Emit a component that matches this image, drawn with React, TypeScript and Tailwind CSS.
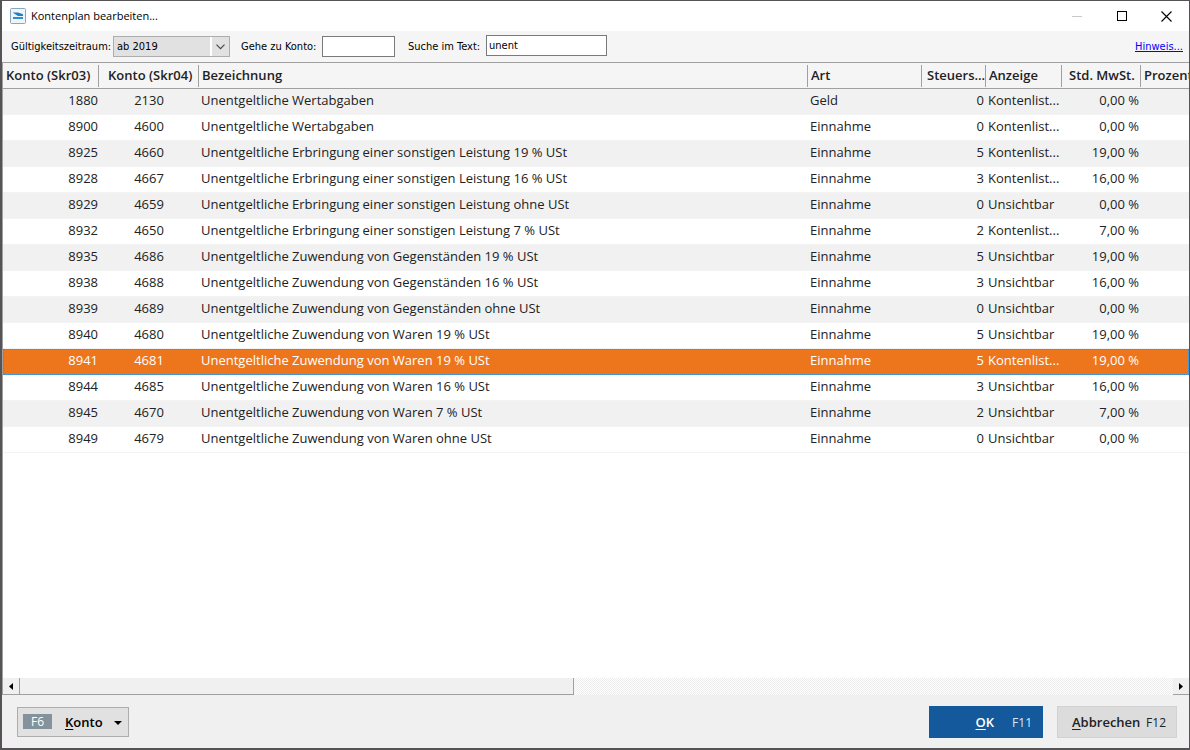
import { useState } from "react";

type Account = {
  skr03: string;
  skr04: string;
  name: string;
  kind: string;
  taxKey: number;
  display: string;
  vat: string;
};

const LIST = "Kontenlist...";
const HIDDEN = "Unsichtbar";

const accounts: Account[] = [
  { skr03: "1880", skr04: "2130", name: "Unentgeltliche Wertabgaben", kind: "Geld", taxKey: 0, display: LIST, vat: "0,00 %" },
  { skr03: "8900", skr04: "4600", name: "Unentgeltliche Wertabgaben", kind: "Einnahme", taxKey: 0, display: LIST, vat: "0,00 %" },
  { skr03: "8925", skr04: "4660", name: "Unentgeltliche Erbringung einer sonstigen Leistung 19 % USt", kind: "Einnahme", taxKey: 5, display: LIST, vat: "19,00 %" },
  { skr03: "8928", skr04: "4667", name: "Unentgeltliche Erbringung einer sonstigen Leistung 16 % USt", kind: "Einnahme", taxKey: 3, display: LIST, vat: "16,00 %" },
  { skr03: "8929", skr04: "4659", name: "Unentgeltliche Erbringung einer sonstigen Leistung ohne USt", kind: "Einnahme", taxKey: 0, display: HIDDEN, vat: "0,00 %" },
  { skr03: "8932", skr04: "4650", name: "Unentgeltliche Erbringung einer sonstigen Leistung 7 % USt", kind: "Einnahme", taxKey: 2, display: LIST, vat: "7,00 %" },
  { skr03: "8935", skr04: "4686", name: "Unentgeltliche Zuwendung von Gegenständen 19 % USt", kind: "Einnahme", taxKey: 5, display: HIDDEN, vat: "19,00 %" },
  { skr03: "8938", skr04: "4688", name: "Unentgeltliche Zuwendung von Gegenständen 16 % USt", kind: "Einnahme", taxKey: 3, display: HIDDEN, vat: "16,00 %" },
  { skr03: "8939", skr04: "4689", name: "Unentgeltliche Zuwendung von Gegenständen ohne USt", kind: "Einnahme", taxKey: 0, display: HIDDEN, vat: "0,00 %" },
  { skr03: "8940", skr04: "4680", name: "Unentgeltliche Zuwendung von Waren 19 % USt", kind: "Einnahme", taxKey: 5, display: HIDDEN, vat: "19,00 %" },
  { skr03: "8941", skr04: "4681", name: "Unentgeltliche Zuwendung von Waren 19 % USt", kind: "Einnahme", taxKey: 5, display: LIST, vat: "19,00 %" },
  { skr03: "8944", skr04: "4685", name: "Unentgeltliche Zuwendung von Waren 16 % USt", kind: "Einnahme", taxKey: 3, display: HIDDEN, vat: "16,00 %" },
  { skr03: "8945", skr04: "4670", name: "Unentgeltliche Zuwendung von Waren 7 % USt", kind: "Einnahme", taxKey: 2, display: HIDDEN, vat: "7,00 %" },
  { skr03: "8949", skr04: "4679", name: "Unentgeltliche Zuwendung von Waren ohne USt", kind: "Einnahme", taxKey: 0, display: HIDDEN, vat: "0,00 %" },
];

const columns = [
  { label: "Konto (Skr03)", width: "w-[96px]" },
  { label: "Konto (Skr04)", width: "w-[100px]", pad: "pl-[9px]" },
  { label: "Bezeichnung", width: "" },
  { label: "Art", width: "w-[114px]" },
  { label: "Steuers...", width: "w-[64px]", pad: "pl-[5px]" },
  { label: "Anzeige", width: "w-[76px]" },
  { label: "Std. MwSt.", width: "w-[79px]", pad: "pl-[7px]" },
  { label: "Prozent", width: "w-[48px]" },
];

function AppIcon() {
  return (
    <svg width="16" height="16" viewBox="0 0 16 16" aria-hidden>
      <rect x="0.5" y="0.5" width="15" height="15" rx="1" fill="#f1f4f6" stroke="#86a9bd" />
      <path d="M2.5 4.6 H8 L13 6.2 V8 H8 Z" fill="#1f7fc4" />
      <path d="M3 9 H13 V11 H3 Z" fill="#2b8fd3" />
    </svg>
  );
}

function TitleBar() {
  return (
    <header className="flex h-[30px] shrink-0 items-center bg-white pl-2">
      <AppIcon />
      <h1 className="ml-[5px] flex-1 text-[11px] text-black">Kontenplan bearbeiten...</h1>
      <button type="button" aria-label="Minimieren" disabled className="grid h-full w-[45px] place-items-center">
        <svg width="10" height="10" viewBox="0 0 10 10" shapeRendering="crispEdges">
          <path d="M0 5.5h10" stroke="#c8c8c8" />
        </svg>
      </button>
      <button type="button" aria-label="Maximieren" className="grid h-full w-[45px] place-items-center">
        <svg width="10" height="10" viewBox="0 0 10 10" shapeRendering="crispEdges">
          <path d="M0.5 0.5h9v9h-9z" fill="none" stroke="#000" />
        </svg>
      </button>
      <button type="button" aria-label="Schließen" className="grid h-full w-[45px] place-items-center">
        <svg width="11" height="11" viewBox="0 0 11 11">
          <path d="M0.5 0.5l10 10M10.5 0.5l-10 10" stroke="#000" strokeWidth="1.1" />
        </svg>
      </button>
    </header>
  );
}

function Toolbar() {
  const [search, setSearch] = useState("unent");
  return (
    <div className="flex h-[31px] shrink-0 items-center bg-[#f5f5f5] pr-[6px] pl-[9px] font-['DejaVu_Sans_Condensed','DejaVu_Sans',sans-serif] text-[11px] text-black">
      <label htmlFor="period" className="w-[102px] pt-px whitespace-nowrap">
        Gültigkeitszeitraum:
      </label>
      <div className="relative">
        <select
          id="period"
          defaultValue="2019"
          className="h-[21px] w-[117px] appearance-none border border-[#adadad] bg-[#e1e1e1] pt-px pl-[3px]"
        >
          <option value="2019">ab 2019</option>
        </select>
        <span className="pointer-events-none absolute inset-y-px right-px grid w-[19px] place-items-center border-l-2 border-white">
          <svg width="9" height="6" viewBox="0 0 9 6" aria-hidden>
            <path d="M0.5 0.7l4 4 4-4" fill="none" stroke="#444" strokeWidth="1.1" />
          </svg>
        </span>
      </div>
      <label htmlFor="goto" className="ml-[11px] w-[81px] pt-px whitespace-nowrap">
        Gehe zu Konto:
      </label>
      <input id="goto" type="text" className="h-[21px] w-[73px] border border-[#7a7a7a] bg-white px-[2px]" />
      <label htmlFor="search" className="ml-[13px] w-[78px] pt-px whitespace-nowrap">
        Suche im Text:
      </label>
      <input
        id="search"
        type="text"
        value={search}
        onChange={(e) => setSearch(e.target.value)}
        className="mb-[2px] h-[21px] w-[121px] border border-[#7a7a7a] bg-white px-[2px]"
      />
      <a href="#hinweis" className="ml-auto pt-px text-[#0000ff] underline">
        Hinweis...
      </a>
    </div>
  );
}

function AccountTable() {
  const [selected, setSelected] = useState("8941");
  return (
    <div className="min-h-0 flex-1 overflow-hidden bg-white">
      <table className="w-full table-fixed border-separate border-spacing-0 text-[13px] text-[#222]">
        <thead>
          <tr className="bg-[#f5f5f5]">
            {columns.map((col) => (
              <th
                key={col.label}
                scope="col"
                className={`${col.width} h-[26px] border-b border-[#a0a0a0] p-0 text-left font-semibold`}
              >
                <div
                  className={`h-[22px] border-[#a0a0a0] leading-[20px] whitespace-nowrap ${col.pad ?? "pl-[3px]"} ${col.label === "Prozent" ? "" : "border-r"}`}
                >
                  {col.label}
                </div>
              </th>
            ))}
          </tr>
        </thead>
        <tbody>
          {accounts.map((a) => (
            <tr
              key={a.skr03}
              aria-selected={a.skr03 === selected}
              onClick={() => setSelected(a.skr03)}
              className={`whitespace-nowrap *:h-[26px] *:border-b *:border-[#f3f3f3] *:p-0 *:pb-[2px] ${
                a.skr03 === selected
                  ? "bg-[#ed751c] text-white outline-1 -outline-offset-1 outline-dotted outline-[#3a8dd0] *:border-transparent"
                  : "odd:bg-[#f1f1f1]"
              }`}
            >
              <td>
                <div className="pr-px text-right">{a.skr03}</div>
              </td>
              <td className="text-center">{a.skr04}</td>
              <td>
                <div className="overflow-hidden pl-[2px]">{a.name}</div>
              </td>
              <td>
                <div className="pl-[2px]">{a.kind}</div>
              </td>
              <td>
                <div className="pr-[2px] text-right">{a.taxKey}</div>
              </td>
              <td>
                <div className="pl-[2px]">{a.display}</div>
              </td>
              <td>
                <div className="pr-[2px] text-right">{a.vat}</div>
              </td>
              <td />
            </tr>
          ))}
        </tbody>
      </table>
    </div>
  );
}

function ScrollBar() {
  return (
    <div className="flex h-[17px] shrink-0 bg-[repeating-conic-gradient(#ececec_0_25%,#ffffff_0_50%)] bg-[size:2px_2px]">
      <button
        type="button"
        aria-label="Nach links"
        className="grid w-[17px] place-items-center border-r border-b border-[#a0a0a0] bg-[#f0f0f0]"
      >
        <svg width="4" height="7" viewBox="0 0 4 7" aria-hidden>
          <path d="M4 0v7L0 3.5z" fill="#000" />
        </svg>
      </button>
      <div className="w-[554px] border-r border-b border-[#a0a0a0] bg-[#f0f0f0]" />
      <button
        type="button"
        aria-label="Nach rechts"
        className="ml-auto grid w-[16px] place-items-center border-b border-[#a0a0a0] bg-[#f0f0f0]"
      >
        <svg width="4" height="7" viewBox="0 0 4 7" aria-hidden>
          <path d="M0 0v7L4 3.5z" fill="#000" />
        </svg>
      </button>
    </div>
  );
}

function Footer() {
  return (
    <footer className="flex h-[53px] shrink-0 items-center bg-[#f0f0f0] pr-3 pl-[15px] text-[13px]">
      <button
        type="button"
        className="flex h-[30px] w-[112px] items-center border border-[#adadad] bg-[#e1e1e1] pl-[5px] text-black"
      >
        <span className="grid h-[15px] w-[29px] place-items-center bg-[#84929b] text-[12px] leading-none text-white">
          F6
        </span>
        <span className="ml-[13px] pt-[2px] font-semibold">
          <u className="underline-offset-2">K</u>onto
        </span>
        <svg width="8" height="4" viewBox="0 0 8 4" className="mt-[2px] mr-[6px] ml-auto" aria-hidden>
          <path d="M0 0h8L4 4z" fill="#000" />
        </svg>
      </button>
      <button
        type="button"
        className="ml-auto flex h-8 w-[114px] items-center justify-end bg-[#14599b] pt-[2px] pr-[11px] text-white"
      >
        <span className="font-semibold">
          <u className="underline-offset-2">O</u>K
        </span>
        <span className="ml-[18px] text-[12px] text-[#d5e8ee]">F11</span>
      </button>
      <button
        type="button"
        className="ml-[14px] flex h-8 w-[120px] items-center justify-between border border-[#d2d2d2] bg-[#dcdcdc] pt-[2px] pr-[10px] pl-[14px] text-[#222]"
      >
        <span className="font-semibold">
          <u className="underline-offset-2">A</u>bbrechen
        </span>
        <span className="text-[12px]">F12</span>
      </button>
    </footer>
  );
}

export default function App() {
  return (
    <div className="flex h-screen flex-col border-t border-r border-b-2 border-l-2 border-[#555355] bg-[#f0f0f0] font-['Open_Sans','Noto_Sans',sans-serif]">
      <TitleBar />
      <Toolbar />
      <main className="flex min-h-0 flex-1 flex-col border-t border-l border-[#a0a0a0]">
        <AccountTable />
        <ScrollBar />
      </main>
      <Footer />
    </div>
  );
}
